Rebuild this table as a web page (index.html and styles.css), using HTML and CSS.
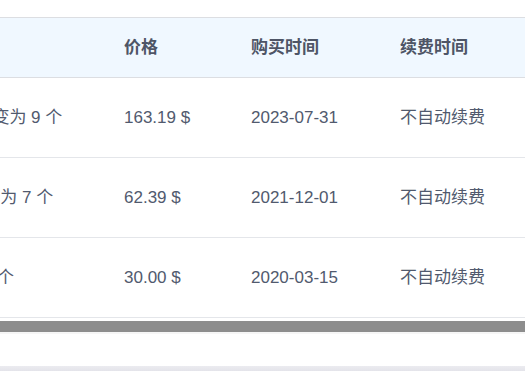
FILE: index.html
```html
<!DOCTYPE html>
<html lang="zh-CN">
<head>
<meta charset="utf-8">
<title>订单列表</title>
<link rel="stylesheet" href="styles.css">
</head>
<body>
<div class="panel">
  <div class="table-wrap">
    <div class="table">
      <div class="row head">
        <div class="cell">变更内容</div>
        <div class="cell">价格</div>
        <div class="cell">购买时间</div>
        <div class="cell">续费时间</div>
        <div class="cell">操作</div>
      </div>
      <div class="row">
        <div class="cell">IP 数量由 5 个变为 9 个</div>
        <div class="cell">163.19 $</div>
        <div class="cell">2023-07-31</div>
        <div class="cell">不自动续费</div>
        <div class="cell">详情</div>
      </div>
      <div class="row">
        <div class="cell">IP数量由 5个变为 7 个</div>
        <div class="cell">62.39 $</div>
        <div class="cell">2021-12-01</div>
        <div class="cell">不自动续费</div>
        <div class="cell">详情</div>
      </div>
      <div class="row">
        <div class="cell">新增 IP 数量 1 个</div>
        <div class="cell">30.00 $</div>
        <div class="cell">2020-03-15</div>
        <div class="cell">不自动续费</div>
        <div class="cell">详情</div>
      </div>
    </div>
  </div>
  <div class="scrollbar"><div class="thumb"></div></div>
</div>
<div class="shadow-band"></div>
</body>
</html>
```

FILE: styles.css
```css
html, body {
  margin: 0;
  padding: 0;
  background: #ffffff;
}

body {
  width: 525px;
  height: 371px;
  overflow: hidden;
  font-family: "Liberation Sans", Arial, "Noto Sans CJK SC", sans-serif;
  font-size: 17px;
  color: #515a6e;
}

.panel {
  padding-top: 17px;
  height: 366px;
  box-sizing: border-box;
}

.table-wrap {
  overflow: hidden;
  width: 525px;
}

.table {
  margin-left: -131px;
  width: 900px;
}

.row {
  display: grid;
  grid-template-columns: 239px 127px 149px 160px 160px;
  align-items: center;
  height: 80px;
  box-sizing: border-box;
  border-bottom: 1px solid #e4e6ea;
}

.row.head {
  height: 61px;
  background: #f0f8ff;
  border-top: 1px solid #dcdee2;
  border-bottom: 1px solid #dcdee2;
  font-weight: 700;
  color: #4e5566;
}

.cell {
  padding-left: 16px;
  line-height: 22px;
  white-space: nowrap;
  overflow: hidden;
}

.scrollbar {
  margin-top: 3px;
  height: 11px;
  border-bottom: 2px solid #f6f6f6;
}

.thumb {
  height: 11px;
  background: #8d8d8d;
}

.shadow-band {
  height: 5px;
  background: linear-gradient(#ebebf0, #e4e4ea);
}
```
